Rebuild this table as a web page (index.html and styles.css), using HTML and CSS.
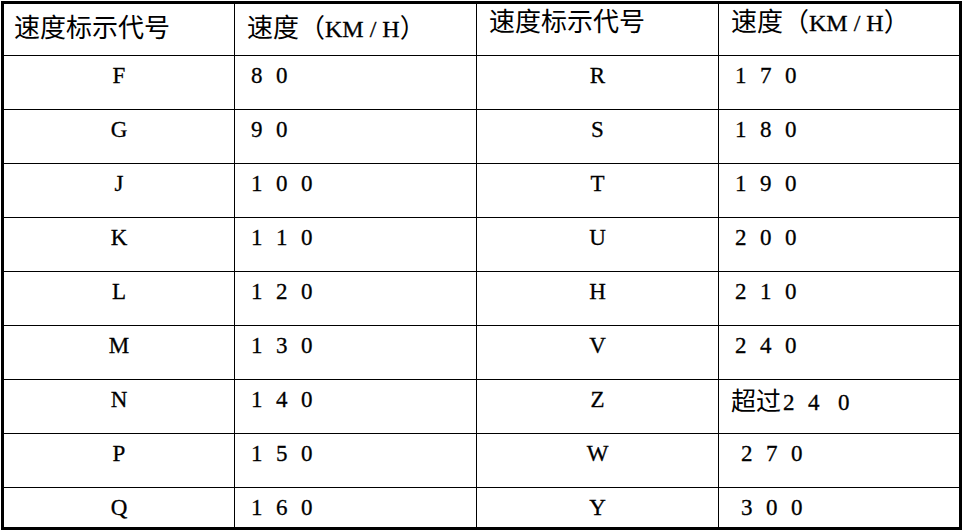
FILE: index.html
```html
<!DOCTYPE html>
<html lang="zh">
<head>
<meta charset="utf-8">
<title>速度标示代号</title>
<link rel="stylesheet" href="styles.css">
</head>
<body>
<div class="table" role="table">
  <div class="cell head c1" role="columnheader">速度标示代号</div>
  <div class="cell head c2" role="columnheader">速度（<span class="unit">KM / H</span>）</div>
  <div class="cell head c3 up" role="columnheader">速度标示代号</div>
  <div class="cell head c4 up last" role="columnheader">速度（<span class="unit">KM / H</span>）</div>

  <div class="cell code">F</div><div class="cell num">8 0</div><div class="cell code">R</div><div class="cell num last">1 7 0</div>
  <div class="cell code">G</div><div class="cell num">9 0</div><div class="cell code">S</div><div class="cell num last">1 8 0</div>
  <div class="cell code">J</div><div class="cell num">1 0 0</div><div class="cell code">T</div><div class="cell num last">1 9 0</div>
  <div class="cell code">K</div><div class="cell num">1 1 0</div><div class="cell code">U</div><div class="cell num last">2 0 0</div>
  <div class="cell code">L</div><div class="cell num">1 2 0</div><div class="cell code">H</div><div class="cell num last">2 1 0</div>
  <div class="cell code">M</div><div class="cell num">1 3 0</div><div class="cell code">V</div><div class="cell num last">2 4 0</div>
  <div class="cell code">N</div><div class="cell num">1 4 0</div><div class="cell code">Z</div><div class="cell num over last"><span class="cjk">超过</span>2 4 <span class="gap">0</span></div>
  <div class="cell code">P</div><div class="cell num">1 5 0</div><div class="cell code">W</div><div class="cell num shift last">2 7 0</div>
  <div class="cell code bottom">Q</div><div class="cell num bottom">1 6 0</div><div class="cell code bottom">Y</div><div class="cell num shift last bottom">3 0 0</div>
</div>
</body>
</html>
```

FILE: styles.css
```css
html, body {
  margin: 0;
  padding: 0;
  background: #ffffff;
}

.table {
  display: grid;
  grid-template-columns: 231px 242px 242px 240px;
  grid-template-rows: 52px repeat(8, 54px) 39px;
  width: max-content;
  margin: 1px 0 0 1px;
  border: 3px solid #000;
  color: #000;
  font-family: "Liberation Serif", "Noto Sans CJK SC", serif;
}

.cell {
  box-sizing: border-box;
  border-right: 1px solid #000;
  border-bottom: 1px solid #000;
  font-size: 23px;
  line-height: 23px;
  padding-top: 8px;
  white-space: nowrap;
  -webkit-text-stroke: 0.3px #000;
}

.cell.last {
  border-right: none;
}

.cell.bottom {
  border-bottom: none;
}

.head {
  font-family: "Noto Sans CJK SC", "Liberation Serif", sans-serif;
  font-size: 26px;
  line-height: 26px;
  padding-top: 9px;
  padding-left: 12px;
  -webkit-text-stroke: 0;
}

.head.c1 {
  padding-left: 10px;
}

.head.up {
  padding-top: 3px;
}

.unit {
  font-family: "Liberation Serif", serif;
  font-size: 24px;
  -webkit-text-stroke: 0.3px #000;
}

.code {
  text-align: center;
}

.num {
  padding-left: 16px;
  word-spacing: 7.75px;
}

.num.shift {
  padding-left: 22px;
}

.num.over {
  padding-left: 12px;
}

.cjk {
  font-family: "Noto Sans CJK SC", sans-serif;
  font-size: 25px;
  margin-right: 2px;
  -webkit-text-stroke: 0;
}

.gap {
  margin-left: 5px;
}
```
